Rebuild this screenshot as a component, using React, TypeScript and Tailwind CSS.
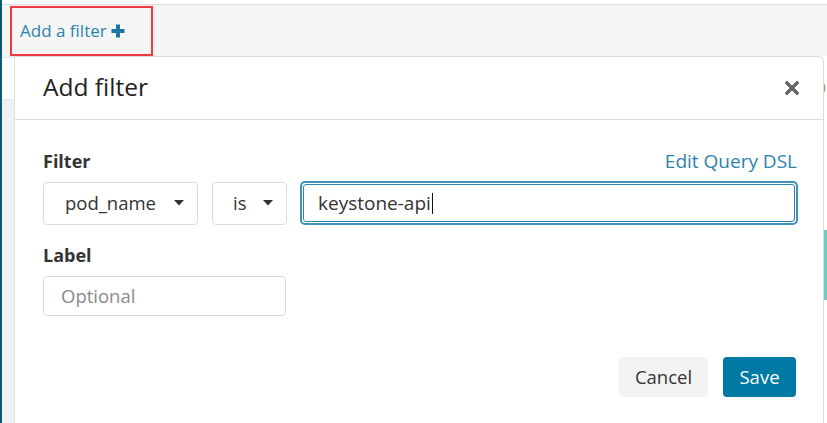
import React from "react";

const font = { fontFamily: '"Open Sans", "Noto Sans", sans-serif' };

function Caret() {
  return (
    <svg width="10" height="6" viewBox="0 0 10 6" className="ml-auto">
      <path d="M0 0 L10 0 L5 5.5 Z" fill="#333" />
    </svg>
  );
}

export default function App() {
  return (
    <div className="w-[827px] h-[423px] overflow-hidden bg-white flex" style={font}>
      <div className="w-[2px] h-full bg-[#0b5a74] shrink-0" />
      <div className="flex-1 flex flex-col min-w-0">
        <div className="h-[4px] bg-white shrink-0" />
        <div className="h-[52px] shrink-0 bg-[#f5f5f5] border-t border-[#dcdcdc] flex items-start pl-[8px] pt-[1px]">
          <div className="w-[143px] h-[50px] border-2 border-[#f0393f] flex items-center pl-[8px] pb-[1px] text-[17px] text-[#2c84ae]">
            <span>Add a filter</span>
            <svg width="14" height="14" viewBox="0 0 14 14" className="ml-[4px] mt-[1px]">
              <path d="M5 0.5 H9 V5 H13.5 V9 H9 V13.5 H5 V9 H0.5 V5 H5 Z" fill="#1c76a3" />
            </svg>
          </div>
        </div>
        <div className="flex-1 flex min-h-0">
          <div className="w-[13px] shrink-0 bg-[#f1f1f1] border-r border-[#e2e2e2] flex flex-col">
            <div className="h-[43px] mt-[1px] bg-white border-t border-b border-[#e6e6e6]" />
          </div>
          <div className="relative z-10 w-[809px] shrink-0 bg-white border-r border-t border-[#dcdcdc] rounded-tr-[6px] flex flex-col">
            <div className="h-[63px] border-b border-[#dcdcdc] flex items-center pl-[28px] pr-[23px] pb-[1px] shrink-0">
              <span className="text-[24.5px] text-[#222] leading-none">Add filter</span>
              <svg width="16" height="16" viewBox="0 0 16 16" className="ml-auto mt-[1px]">
                <path
                  d="M3 1 L8 6 L13 1 L15 3 L10 8 L15 13 L13 15 L8 10 L3 15 L1 13 L6 8 L1 3 Z"
                  fill="#666"
                  stroke="#666"
                  strokeWidth="0.8"
                  strokeLinejoin="round"
                />
              </svg>
            </div>
            <div className="pl-[28px] pr-[25px] pt-[29px] flex flex-col">
              <div className="flex items-center h-[24px]">
                <span className="text-[18px] font-bold text-[#333]">Filter</span>
                <span className="ml-auto text-[19px] text-[#2c84ae] pr-[1px]">Edit Query DSL</span>
              </div>
              <div className="flex items-center mt-[8px]">
                <div className="w-[155px] h-[43px] border border-[#dcdcdc] rounded-[4px] flex items-center pl-[21px] pr-[13px] text-[18.5px] text-[#333]">
                  <span>pod_name</span>
                  <Caret />
                </div>
                <div className="ml-[14px] w-[75px] h-[43px] border border-[#dcdcdc] rounded-[4px] flex items-center pl-[20px] pr-[13px] text-[18.5px] text-[#333]">
                  <span>is</span>
                  <Caret />
                </div>
                <div className="ml-[13px] flex-1 h-[44px] rounded-[5px] border-2 border-[#3d93b8] p-[1px]">
                  <div className="w-full h-full rounded-[3px] border border-[#2f87b0] flex items-center pl-[14px] text-[19px] text-[#333]">
                    <span>keystone-api</span>
                    <span className="w-[1px] h-[21px] bg-[#111] ml-[1px]" />
                  </div>
                </div>
              </div>
              <div className="mt-[18px] h-[24px] flex items-center">
                <span className="text-[18px] font-bold text-[#333]">Label</span>
              </div>
              <div className="mt-[9px] w-[243px] h-[40px] border border-[#dcdcdc] rounded-[4px] flex items-center pl-[17px] text-[18.5px] text-[#8a8a8a]">
                Optional
              </div>
              <div className="mt-[41px] flex justify-end gap-[15px] pr-[2px]">
                <div className="w-[89px] h-[40px] rounded-[4px] bg-[#f3f3f3] flex items-center justify-center text-[18.5px] text-[#333]">
                  Cancel
                </div>
                <div className="w-[73px] h-[40px] rounded-[4px] bg-[#0079a5] flex items-center justify-center text-[18.5px] text-white">
                  Save
                </div>
              </div>
            </div>
          </div>
          <div className="flex-1 flex flex-col">
            <div className="h-[22px]" />
            <div className="h-[20px] text-[14px] text-[#c77a1a] leading-[20px] -ml-[6px]">0</div>
            <div className="h-[132px]" />
            <div className="h-[70px] bg-[#72cbc1]" />
          </div>
        </div>
      </div>
    </div>
  );
}
